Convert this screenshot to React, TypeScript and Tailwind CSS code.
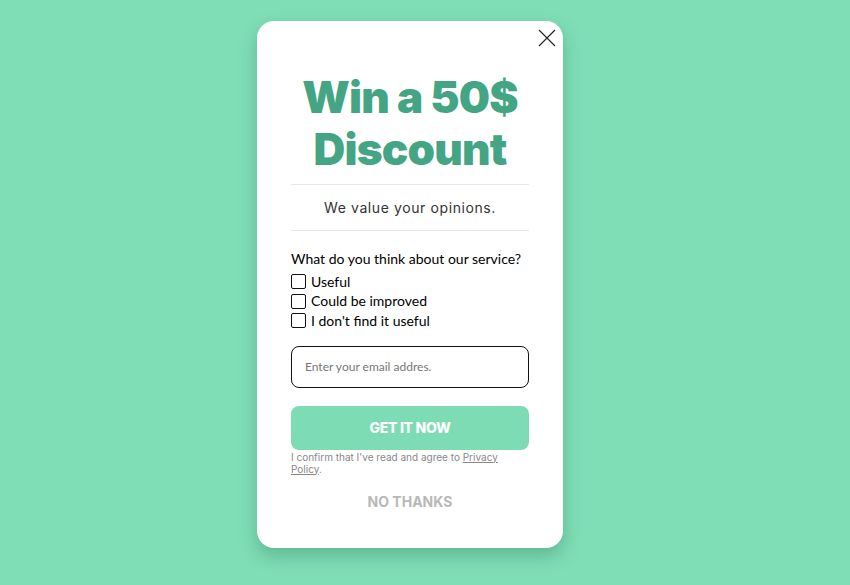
export default function App() {
  const options = ['Useful', 'Could be improved', "I don't find it useful"];

  return (
    <div className="min-h-screen w-full bg-[#7fdeb6] flex justify-center pr-[30px] pt-[21px]">
      <div className="relative w-[306px] h-[527px] bg-white rounded-[17px] shadow-[0_8px_18px_rgba(40,110,80,0.35)] px-[34px] pt-[50px] flex flex-col">
        <button className="absolute right-[8px] top-[8px] w-[17px] h-[17px]" aria-label="close">
          <svg viewBox="0 0 18 18" className="w-[18px] h-[18px]" fill="none" stroke="#222" strokeWidth="1.1">
            <path d="M1 1 L17 17 M17 1 L1 17" />
          </svg>
        </button>

        <h1 className="text-center text-[44px] leading-[52px] font-black not-italic text-[#44a585] tracking-[-0.8px] font-['Inter',sans-serif]">
          Win a 50$<br />Discount
        </h1>

        <div className="mt-[9px] border-t border-[#e8e8e8]" />
        <p className="py-[13px] text-center text-[14px] leading-[19px] tracking-[0.6px] text-[#333] font-['Inter',sans-serif]">
          We value your opinions.
        </p>
        <div className="border-t border-[#e8e8e8]" />

        <div className="mt-[18px] font-['Lato',sans-serif] text-[14px] text-black">
          <p className="leading-[20px] mb-[3px]">What do you think about our service?</p>
          {options.map((o) => (
            <label key={o} className="flex items-center gap-[5px] h-[19.5px]">
              <span className="w-[15px] h-[15px] border border-[#111] rounded-[2px] bg-white" />
              <span className="leading-[18px]">{o}</span>
            </label>
          ))}
        </div>

        <div className="mt-[15px] h-[42px] border border-[#111] rounded-[8px] flex items-center px-[13px]">
          <input
            placeholder="Enter your email addres."
            className="w-full outline-none text-[12px] placeholder:text-[#777] font-['Lato',sans-serif]"
          />
        </div>

        <button className="mt-[18px] h-[44px] w-full rounded-[8px] bg-[#7ddcb4] text-white text-[14px] font-extrabold tracking-[-0.3px] font-['Inter',sans-serif]">
          GET IT NOW
        </button>

        <p className="mt-[1px] text-[10px] leading-[12px] text-[#888] font-['Inter',sans-serif]">
          I confirm that I've read and agree to <span className="underline">Privacy Policy</span>.
        </p>

        <button className="mt-[16px] text-center text-[14px] font-bold text-[#b8b8b8] font-['Inter',sans-serif]">
          NO THANKS
        </button>
      </div>
    </div>
  );
}
